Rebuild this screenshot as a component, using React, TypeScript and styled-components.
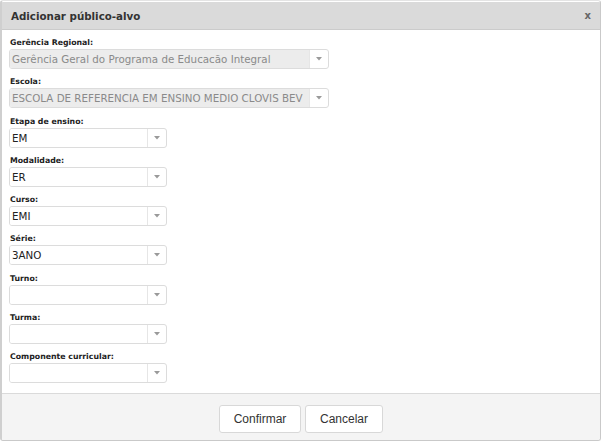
import { FC } from 'react'
import styled, { createGlobalStyle } from 'styled-components'

const GlobalStyle = createGlobalStyle`
  html, body {
    margin: 0;
    padding: 0;
    background: #ffffff;
  }
  * {
    box-sizing: border-box;
  }
`

const Modal = styled.div`
  width: 601px;
  height: 441px;
  border: 1px solid #c9c9c9;
  border-top-color: #e4e4e4;
  border-left: 2px solid #cfcfcf;
  border-radius: 3px;
  display: flex;
  flex-direction: column;
  overflow: hidden;
  font-family: 'DejaVu Sans', Verdana, sans-serif;
`

const Header = styled.div`
  height: 28px;
  margin-top: 1px;
  background: #dadada;
  border-bottom: 1px solid #cbcbcb;
  display: flex;
  align-items: center;
  justify-content: space-between;
  padding: 0 9px 0 9px;

  h3 {
    margin: 0;
    font-size: 10.3px;
    font-weight: bold;
    color: #333333;
  }
`

const Close = styled.button`
  border: 0;
  background: transparent;
  padding: 0;
  font-family: 'DejaVu Sans', Verdana, sans-serif;
  font-size: 10px;
  font-weight: bold;
  color: #666666;
  line-height: 1;
  cursor: pointer;
`

const Body = styled.div`
  flex: 1;
  background: #ffffff;
  padding: 6px 7px 0 7px;
  display: flex;
  flex-direction: column;
`

const Field = styled.div`
  display: flex;
  flex-direction: column;
  margin-bottom: 6.25px;
`

const Label = styled.label`
  font-size: 7.8px;
  font-weight: bold;
  color: #222222;
  line-height: 13px;
  height: 13px;
  padding-left: 1px;
`

const SelectBox = styled.div<{ wide?: boolean; disabled?: boolean }>`
  width: ${(p) => (p.wide ? '320px' : '158px')};
  height: 20px;
  border: 1px solid #dcdcdc;
  border-radius: 3px;
  display: flex;
  overflow: hidden;
  background: #ffffff;

  .value {
    flex: 1;
    min-width: 0;
    padding-left: 2px;
    font-size: 10.3px;
    line-height: 18px;
    white-space: nowrap;
    overflow: hidden;
    color: ${(p) => (p.disabled ? '#8a8a8a' : '#222222')};
    background: ${(p) => (p.disabled ? '#ececec' : '#ffffff')};
  }

  .arrow {
    width: 19px;
    border-left: 1px solid #e6e6e6;
    display: flex;
    align-items: center;
    justify-content: center;
  }
`

const Caret = () => (
  <svg width="6" height="4" viewBox="0 0 6 4">
    <path d="M0 0 L6 0 L3 3.5 Z" fill="#9a9a9a" />
  </svg>
)

const Footer = styled.div`
  height: 47px;
  background: #f4f4f4;
  border-top: 1px solid #dadada;
  display: flex;
  align-items: center;
  justify-content: center;
  gap: 4px;
  padding-top: 4px;
`

const Button = styled.button<{ w: number }>`
  width: ${(p) => p.w}px;
  height: 28px;
  background: #ffffff;
  border: 1px solid #d8d8d8;
  border-radius: 3px;
  font-family: 'Liberation Sans', Arial, sans-serif;
  font-size: 12px;
  color: #333333;
  cursor: pointer;
`

interface ISelect {
  label: string
  value?: string
  wide?: boolean
  disabled?: boolean
}

const fields: ISelect[] = [
  { label: 'Gerência Regional:', value: 'Gerência Geral do Programa de Educacão Integral', wide: true, disabled: true },
  { label: 'Escola:', value: 'ESCOLA DE REFERENCIA EM ENSINO MEDIO CLOVIS BEV', wide: true, disabled: true },
  { label: 'Etapa de ensino:', value: 'EM' },
  { label: 'Modalidade:', value: 'ER' },
  { label: 'Curso:', value: 'EMI' },
  { label: 'Série:', value: '3ANO' },
  { label: 'Turno:' },
  { label: 'Turma:' },
  { label: 'Componente curricular:' },
]

const SelectField: FC<ISelect> = ({ label, value, wide, disabled }) => (
  <Field>
    <Label>{label}</Label>
    <SelectBox wide={wide} disabled={disabled}>
      <div className="value">{value}</div>
      <div className="arrow">
        <Caret />
      </div>
    </SelectBox>
  </Field>
)

const App: FC = () => {
  return (
    <>
      <GlobalStyle />
      <Modal>
        <Header>
          <h3>Adicionar público-alvo</h3>
          <Close type="button">x</Close>
        </Header>
        <Body>
          {fields.map((f) => (
            <SelectField key={f.label} {...f} />
          ))}
        </Body>
        <Footer>
          <Button w={82}>Confirmar</Button>
          <Button w={78}>Cancelar</Button>
        </Footer>
      </Modal>
    </>
  )
}

export default App
